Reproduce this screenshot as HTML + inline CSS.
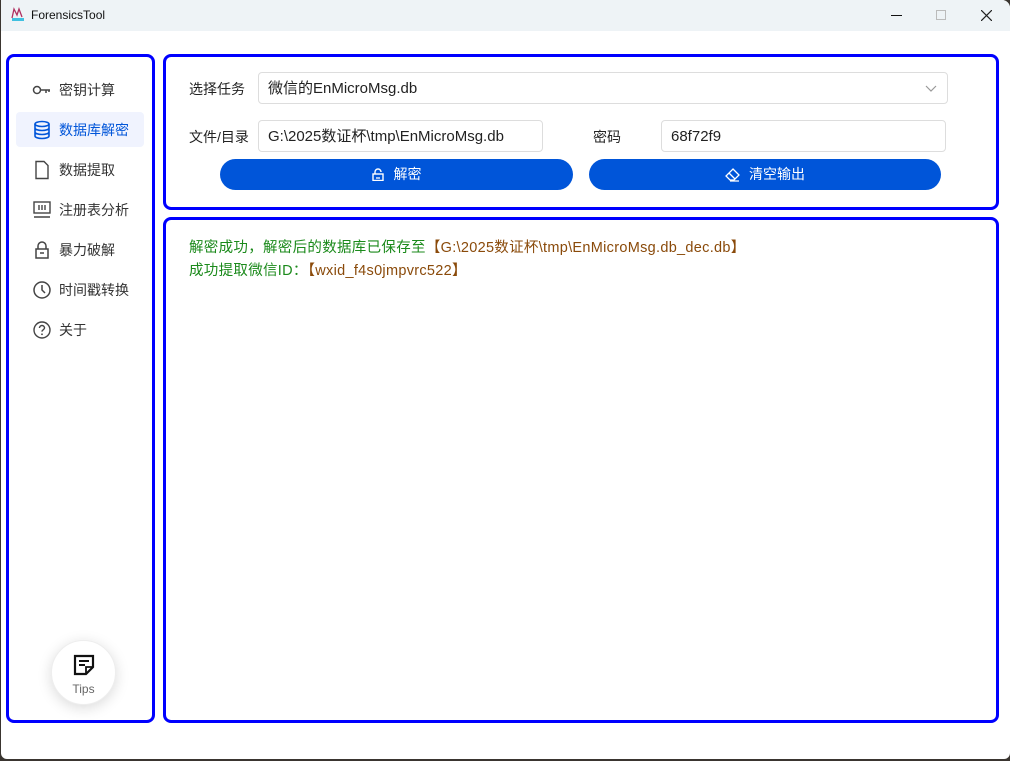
<!DOCTYPE html>
<html><head><meta charset="utf-8"><style>
*{margin:0;padding:0;box-sizing:border-box}
body{width:1010px;height:761px;background:#3a3530;overflow:hidden;font-family:"Liberation Sans","Noto Sans CJK SC",sans-serif;font-size:14px;color:#222;position:relative}
.win{position:absolute;left:1px;top:0;width:1009px;height:759px;background:#fff;border-radius:0 8px 6px 6px;overflow:hidden}
.title{position:absolute;left:0;top:0;width:100%;height:31px;background:#eef3f6}
.title span{position:absolute;left:30px;top:8px;font-size:12px;color:#111}
.panel{position:absolute;border:3px solid #0000ff;border-radius:8px}
.nav{position:absolute;left:15px;width:128px;height:35px;border-radius:4px}
.nav svg{position:absolute;left:16px;top:8px}
.nav span{position:absolute;left:43px;top:8px;font-size:14px;color:#333}
.lbl{position:absolute;font-size:14px;color:#222}
.inp{position:absolute;border:1px solid #ddd;border-radius:4px;background:#fff;font-size:15px;padding:0 9px;height:32px;line-height:32px;color:#222}
.btn{position:absolute;top:159px;height:31px;background:#0055d9;border-radius:16px;color:#fff;font-size:14px;text-align:center;line-height:31px}
.g{color:#1b8a1b}.b{color:#8a4a0a}
</style></head><body>
<div class="win">
<div class="title">
<svg style="position:absolute;left:9px;top:6px" width="16" height="16" viewBox="0 0 16 16"><path d="M2 12L4 3 7 9 9 3 12 11" fill="none" stroke="#b03060" stroke-width="1.3"/><rect x="2" y="12" width="12" height="3" fill="#40c0e0"/></svg>
<span>ForensicsTool</span>
<div style="position:absolute;left:890px;top:15px;width:11px;height:1px;background:#111"></div>
<div style="position:absolute;left:935px;top:10px;width:10px;height:10px;border:1px solid #bbb"></div>
<svg style="position:absolute;left:980px;top:10px" width="11" height="11"><path d="M0 0L11 11M11 0L0 11" stroke="#222" stroke-width="1.2"/></svg>
</div>

<div class="panel" style="left:5px;top:54px;width:149px;height:669px"></div>
<div class="nav" style="top:72px"><svg width="20" height="20" viewBox="0 0 20 20"><circle cx="5" cy="10" r="3.5" fill="none" stroke="#444" stroke-width="1.5"/><path d="M8.5 10H18M14 10v3M17 10v2" stroke="#444" stroke-width="1.5" fill="none"/></svg><span>密钥计算</span></div>
<div class="nav" style="top:112px;background:#f0f3fe"><svg width="20" height="20" viewBox="0 0 20 20"><ellipse cx="10" cy="4" rx="7" ry="2.5" fill="none" stroke="#0055d9" stroke-width="1.6"/><path d="M3 4v12c0 1.4 3 2.5 7 2.5s7-1.1 7-2.5V4M3 8c0 1.4 3 2.5 7 2.5s7-1.1 7-2.5M3 12c0 1.4 3 2.5 7 2.5s7-1.1 7-2.5" fill="none" stroke="#0055d9" stroke-width="1.6"/></svg><span style="color:#0055d9">数据库解密</span></div>
<div class="nav" style="top:152px"><svg width="20" height="20" viewBox="0 0 20 20"><path d="M4 1.5h8l4 4v13H4z" fill="none" stroke="#444" stroke-width="1.4"/></svg><span>数据提取</span></div>
<div class="nav" style="top:192px"><svg width="20" height="20" viewBox="0 0 20 20"><rect x="2" y="2" width="16" height="11" fill="none" stroke="#444" stroke-width="1.4"/><path d="M7 5v5M10 5v5M13 5v5M2 17h16" stroke="#444" stroke-width="1.4"/></svg><span>注册表分析</span></div>
<div class="nav" style="top:232px"><svg width="20" height="20" viewBox="0 0 20 20"><path d="M6 9V6a4 4 0 018 0v3" fill="none" stroke="#444" stroke-width="1.5"/><rect x="4" y="9" width="12" height="9" fill="none" stroke="#444" stroke-width="1.5"/><path d="M8 13h4" stroke="#444" stroke-width="1.5"/></svg><span>暴力破解</span></div>
<div class="nav" style="top:272px"><svg width="20" height="20" viewBox="0 0 20 20"><circle cx="10" cy="10" r="8" fill="none" stroke="#444" stroke-width="1.5"/><path d="M10 5v5l3 3" fill="none" stroke="#444" stroke-width="1.5"/></svg><span>时间戳转换</span></div>
<div class="nav" style="top:312px"><svg width="20" height="20" viewBox="0 0 20 20"><circle cx="10" cy="10" r="8" fill="none" stroke="#444" stroke-width="1.4"/><path d="M7.5 8a2.5 2.5 0 115 0c0 1.6-2.5 1.8-2.5 3.6" fill="none" stroke="#444" stroke-width="1.4"/><circle cx="10" cy="14.3" r=".9" fill="#444"/></svg><span>关于</span></div>

<div style="position:absolute;left:50px;top:640px;width:65px;height:65px;border-radius:50%;background:#fff;box-shadow:0 3px 14px rgba(0,0,0,.15);border:1px solid #eee">
<svg style="position:absolute;left:21px;top:13px" width="22" height="22" viewBox="0 0 22 22"><path d="M2 2h18v11l-7 7H2z" fill="none" stroke="#111" stroke-width="2.2"/><path d="M6 7h10M6 11h6" stroke="#111" stroke-width="2"/><path d="M13 20v-7h7" fill="none" stroke="#111" stroke-width="1.8"/></svg>
<div style="position:absolute;top:41px;width:100%;text-align:center;font-size:12px;color:#666">Tips</div>
</div>

<div class="panel" style="left:162px;top:54px;width:836px;height:156px"></div>
<div class="lbl" style="left:188px;top:79px">选择任务</div>
<div class="inp" style="left:257px;top:72px;width:690px">微信的EnMicroMsg.db
<svg style="position:absolute;right:10px;top:12px" width="12" height="7"><path d="M1 1l5 5 5-5" fill="none" stroke="#999" stroke-width="1.2"/></svg></div>
<div class="lbl" style="left:188px;top:127px">文件/目录</div>
<div class="inp" style="left:257px;top:120px;width:285px">G:\2025数证杯\tmp\EnMicroMsg.db</div>
<div class="lbl" style="left:592px;top:127px">密码</div>
<div class="inp" style="left:660px;top:120px;width:285px">68f72f9</div>
<div class="btn" style="left:219px;width:353px"><svg style="vertical-align:-2px;margin-right:10px" width="12" height="13" viewBox="0 0 12 13"><path d="M3 6V4a3 3 0 016 0" fill="none" stroke="#fff" stroke-width="1.4"/><rect x="1" y="6" width="10" height="6.5" fill="none" stroke="#fff" stroke-width="1.4"/><path d="M4 10h4" stroke="#fff" stroke-width="1.3"/></svg>解密</div>
<div class="btn" style="left:588px;width:352px"><svg style="vertical-align:-3px;margin-right:9px" width="15" height="14" viewBox="0 0 15 14"><path d="M8 1l6 6-5 5H5L1 8z M4 5l6 6M5 13h9" fill="none" stroke="#fff" stroke-width="1.3"/></svg>清空输出</div>

<div class="panel" style="left:162px;top:217px;width:836px;height:506px"></div>
<div style="position:absolute;left:188px;top:237px;line-height:23px;font-size:14.5px;letter-spacing:0.3px">
<div><span class="g">解密成功，解密后的数据库已保存至</span><span class="b">【G:\2025数证杯\tmp\EnMicroMsg.db_dec.db】</span></div>
<div><span class="g">成功提取微信ID：</span><span class="b">【wxid_f4s0jmpvrc522】</span></div>
</div>
</div>
</body></html>
